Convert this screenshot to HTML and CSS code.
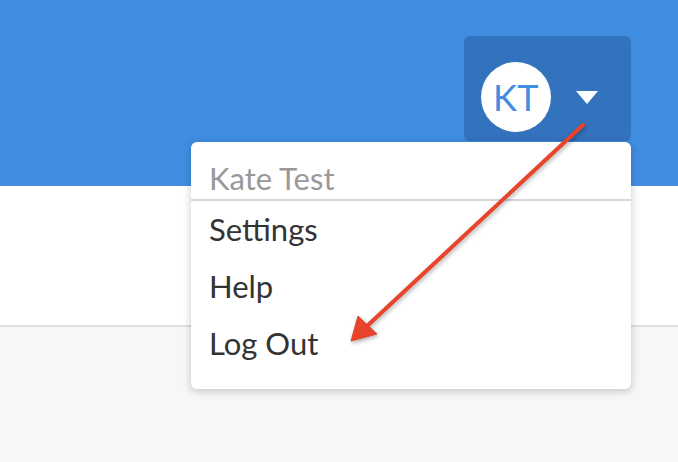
FILE: index.html
```html
<!DOCTYPE html>
<html lang="en">
<head>
    <meta charset="UTF-8">
    <meta name="viewport" content="width=device-width, initial-scale=1.0">
    <title>Account Menu</title>
    <link rel="stylesheet" href="styles.css">
</head>
<body>
    <header class="topbar">
        <div class="user-button">
            <div class="avatar">KT</div>
            <div class="caret"></div>
        </div>
    </header>

    <main class="content">
        <div class="panel"></div>
    </main>

    <!-- Dropdown menu -->
    <div class="menu">
        <div class="menu-name">Kate Test</div>
        <a class="menu-item" href="#">Settings</a>
        <a class="menu-item" href="#">Help</a>
        <a class="menu-item" href="#">Log Out</a>
    </div>

    <!-- Annotation arrow -->
    <svg class="annotation" width="678" height="462" viewBox="0 0 678 462">
        <line x1="583" y1="125" x2="366" y2="327" stroke="#e8432b" stroke-width="4" stroke-linecap="round"/>
        <polygon points="351,341 358,316 377,334" fill="#e8432b" stroke="#e8432b" stroke-width="1" stroke-linejoin="round"/>
    </svg>
</body>
</html>
```

FILE: styles.css
```css
* {
    margin: 0;
    padding: 0;
    box-sizing: border-box;
}

body {
    font-family: 'Lato', 'Open Sans', sans-serif;
    background-color: #f7f7f7;
    color: #333;
    width: 678px;
    height: 462px;
    overflow: hidden;
    position: relative;
}

/* Top bar */
.topbar {
    height: 186px;
    background-color: #408de2;
    display: flex;
    justify-content: flex-end;
    align-items: flex-start;
    padding: 36px 47px 0 0;
}

.user-button {
    display: flex;
    align-items: center;
    gap: 25px;
    height: 105px;
    padding: 17px 33px 0 17px;
    background-color: #3372bd;
    border-radius: 6px;
}

.avatar {
    width: 70px;
    height: 70px;
    border-radius: 50%;
    background-color: #fff;
    color: #408de2;
    font-size: 36px;
    display: flex;
    align-items: center;
    justify-content: center;
    letter-spacing: 0.5px;
}

.caret {
    width: 0;
    height: 0;
    border-left: 11px solid transparent;
    border-right: 11px solid transparent;
    border-top: 13px solid #fff;
}

/* Page content */
.panel {
    height: 141px;
    background-color: #fff;
    border-bottom: 2px solid #e0e0e0;
}

/* Dropdown */
.menu {
    position: absolute;
    top: 142px;
    left: 191px;
    width: 440px;
    height: 247px;
    background-color: #fff;
    border-radius: 6px;
    box-shadow: 0 2px 8px rgba(0, 0, 0, 0.22);
    display: flex;
    flex-direction: column;
}

.menu-name {
    padding: 19px 18px 4px;
    line-height: 34px;
    font-size: 31px;
    color: #999;
    border-bottom: 2px solid #d6d6d6;
}

.menu-item {
    display: block;
    padding: 0 18px;
    line-height: 57px;
    font-size: 31px;
    color: #333;
    text-decoration: none;
}

/* Arrow overlay */
.annotation {
    position: absolute;
    top: 0;
    left: 0;
    pointer-events: none;
    filter: drop-shadow(1px 2px 2px rgba(0, 0, 0, 0.3));
}
```
